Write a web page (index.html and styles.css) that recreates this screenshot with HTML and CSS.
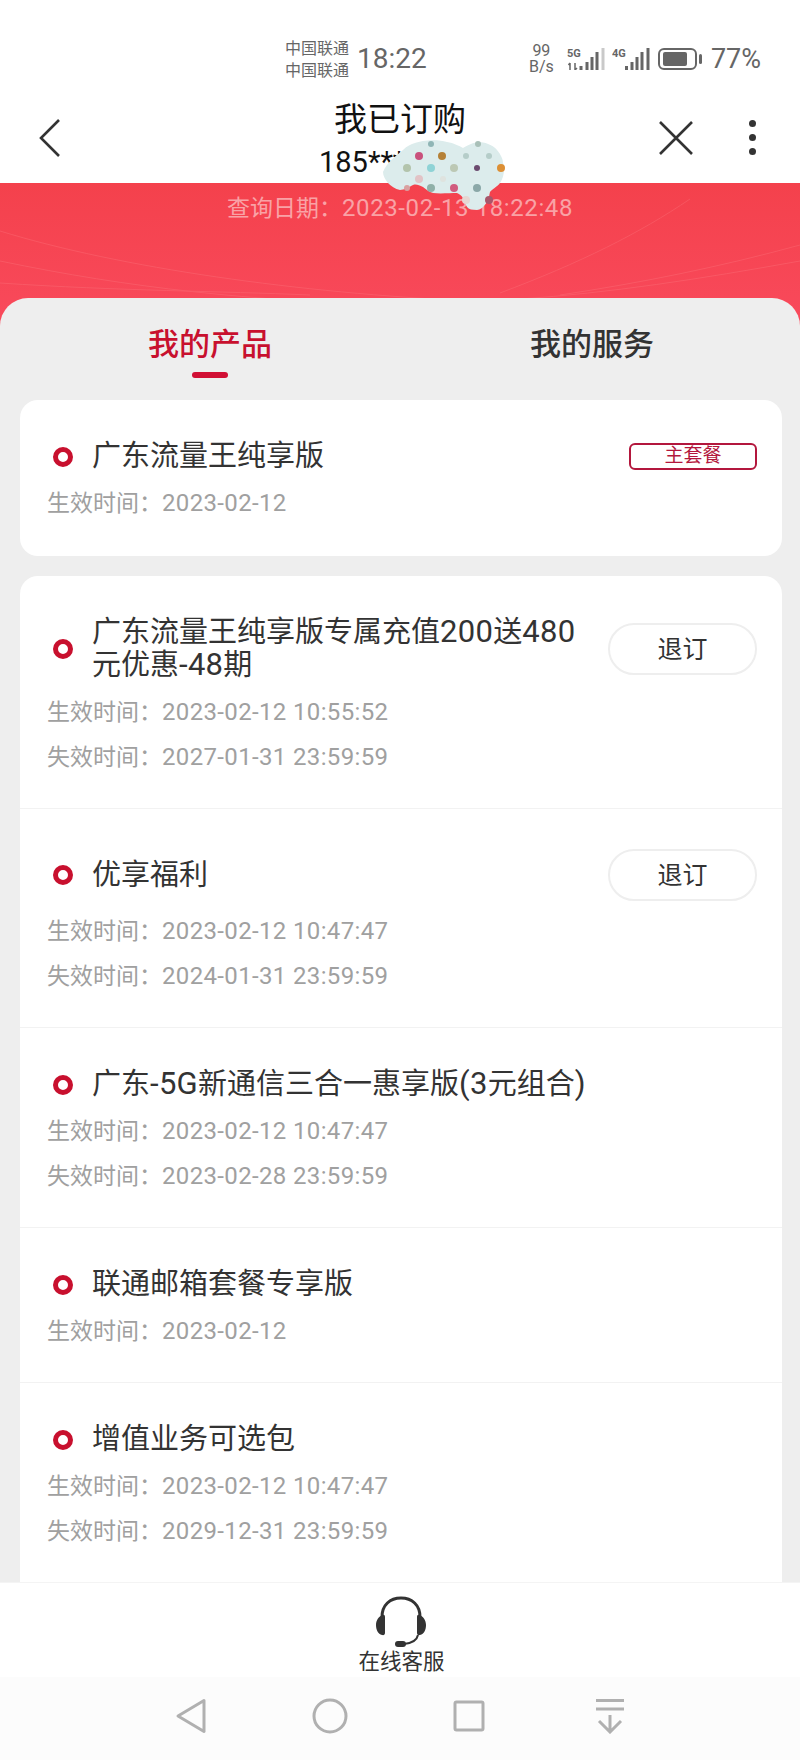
FILE: index.html
```html
<!DOCTYPE html>
<html lang="zh-CN">
<head>
    <meta charset="UTF-8">
    <meta name="viewport" content="width=device-width, initial-scale=1.0">
    <title>我已订购</title>
    <link rel="stylesheet" href="styles.css">
</head>
<body>
    <div class="page">
        <div class="status-bar">
            <div class="carrier"><span>中国联通</span><span>中国联通</span></div>
            <div class="clock">18:22</div>
            <div class="status-right">
                <div class="speed"><span>99</span><span>B/s</span></div>
                <svg class="signal" width="38" height="22" viewBox="0 0 38 22">
                    <text x="0" y="9" class="net-label">5G</text>
                    <path d="M3 15v7M1.500 17l1.500-2M8 15v7M8 22l2-2" stroke="#666" stroke-width="1.500" fill="none"/>
                    <rect x="12.500" y="18" width="3" height="4" fill="#666"/>
                    <rect x="18.500" y="14" width="3" height="8" fill="#666"/>
                    <rect x="23.500" y="9" width="3" height="13" fill="#666"/>
                    <rect x="28.500" y="4" width="3" height="18" fill="#666"/>
                    <rect x="34.500" y="0" width="3" height="22" fill="#c9c9c9"/>
                </svg>
                <svg class="signal" width="38" height="22" viewBox="0 0 38 22">
                    <text x="0" y="9" class="net-label">4G</text>
                    <rect x="13" y="18" width="3" height="4" fill="#666"/>
                    <rect x="18.500" y="14" width="3" height="8" fill="#666"/>
                    <rect x="23.500" y="9" width="3" height="13" fill="#666"/>
                    <rect x="28.500" y="4" width="3" height="18" fill="#666"/>
                    <rect x="34.500" y="0" width="3" height="22" fill="#666"/>
                </svg>
                <svg class="battery" width="44" height="22" viewBox="0 0 44 22">
                    <rect x="1" y="1" width="37" height="20" rx="5" fill="none" stroke="#666" stroke-width="2"/>
                    <rect x="5" y="4" width="24" height="14" rx="2" fill="#666"/>
                    <rect x="41" y="6" width="3" height="10" rx="1.500" fill="#666"/>
                </svg>
                <div class="percent">77%</div>
            </div>
        </div>

        <div class="nav-bar">
            <svg class="nav-back" width="24" height="40" viewBox="0 0 24 40">
                <path d="M21 2L3 20l18 18" fill="none" stroke="#333" stroke-width="2.600"/>
            </svg>
            <div class="nav-title">
                <div class="nav-name">我已订购</div>
                <div class="nav-phone">185****</div>
            </div>
            <svg class="nav-close" width="34" height="34" viewBox="0 0 34 34">
                <path d="M1 1l32 32M33 1L1 33" fill="none" stroke="#333" stroke-width="2.600"/>
            </svg>
            <div class="nav-more"><i></i><i></i><i></i></div>
        </div>

        <div class="hero">
            <svg class="hero-lines" width="800" height="150" viewBox="0 0 800 150">
                <g fill="none" stroke="#ff7f86" stroke-width="1" opacity="0.3">
                    <path d="M0 48C120 85 300 110 470 118"/>
                    <path d="M0 78C130 105 250 118 400 122"/>
                    <path d="M0 100C120 108 220 108 310 112"/>
                    <path d="M800 78C700 96 610 110 520 116"/>
                    <path d="M690 16C640 50 580 80 500 110"/>
                    <path d="M800 62C720 84 640 100 560 112"/>
                </g>
            </svg>
            <div class="query-date">查询日期：<span class="num">2023-02-13 18:22:48</span></div>
        </div>

        <!-- 打码的涂抹块 -->
        <svg class="smudge" width="124" height="72" viewBox="0 0 124 72">
            <path d="M1 32C5 22 14 16 21 10C25 6 29 4 33 3C40 0 56 -1 65 2C72 3 77 6 81 8C84 6 92 2 98 2C106 3 112 6 115 10C119 15 121 19 121 23C123 28 122 38 118 43C115 47 110 49 108 52C107 56 107 59 105 62C102 67 98 70 95 70C90 70 87 69 86 68C83 65 83 60 81 58C79 55 77 54 75 53C68 53 58 54 51 53C47 52 44 49 41 47C37 45 34 44 31 45C27 47 22 50 18 50C13 49 9 46 6 43C3 39 1 36 1 32Z" fill="#dcecec"/>
            <circle cx="49" cy="4" r="3" fill="#8fb5b5"/>
            <circle cx="96" cy="4" r="3" fill="#a9c0b8"/>
            <circle cx="37" cy="16" r="4" fill="#c9517c"/>
            <circle cx="60" cy="16" r="4" fill="#b58137"/>
            <circle cx="84" cy="16" r="3" fill="#b5cdc9"/>
            <circle cx="107" cy="16" r="3" fill="#b5cdc9"/>
            <circle cx="25" cy="28" r="4" fill="#b3c4ac"/>
            <circle cx="49" cy="28" r="4" fill="#8fd3d6"/>
            <circle cx="72" cy="28" r="4" fill="#bcc8b4"/>
            <circle cx="95" cy="28" r="3" fill="#6b4a6e"/>
            <circle cx="119" cy="28" r="4" fill="#dc8f35"/>
            <circle cx="37" cy="39" r="4" fill="#e2c3c6"/>
            <circle cx="61" cy="39" r="3" fill="#dfe3df"/>
            <circle cx="25" cy="48" r="3" fill="#d9a0a0"/>
            <circle cx="49" cy="48" r="4" fill="#8fb0a8"/>
            <circle cx="72" cy="48" r="4" fill="#d15b7e"/>
            <circle cx="95" cy="48" r="4" fill="#8ba8a8"/>
            <circle cx="84" cy="60" r="4" fill="#e6d6d2"/>
            <circle cx="107" cy="60" r="4" fill="#a8566a"/>
        </svg>

        <div class="sheet">
            <div class="tabs">
                <div class="tab tab-active">我的产品</div>
                <div class="tab">我的服务</div>
            </div>

            <div class="card">
                <div class="row row-main">
                    <div class="row-head">
                        <span class="dot"></span>
                        <div class="row-title">广东流量王纯享版</div>
                        <span class="badge">主套餐</span>
                    </div>
                    <div class="meta">生效时间：<span class="num">2023-02-12</span></div>
                </div>
            </div>

            <div class="card">
                <div class="row">
                    <div class="row-head">
                        <span class="dot"></span>
                        <div class="row-title">广东流量王纯享版专属充值<span class="title-num">200</span>送<span class="title-num">480</span>元优惠<span class="title-num">-48</span>期</div>
                        <button class="btn">退订</button>
                    </div>
                    <div class="meta">生效时间：<span class="num">2023-02-12 10:55:52</span></div>
                    <div class="meta">失效时间：<span class="num">2027-01-31 23:59:59</span></div>
                </div>
                <div class="row">
                    <div class="row-head">
                        <span class="dot"></span>
                        <div class="row-title">优享福利</div>
                        <button class="btn">退订</button>
                    </div>
                    <div class="meta">生效时间：<span class="num">2023-02-12 10:47:47</span></div>
                    <div class="meta">失效时间：<span class="num">2024-01-31 23:59:59</span></div>
                </div>
                <div class="row">
                    <div class="row-head">
                        <span class="dot"></span>
                        <div class="row-title">广东<span class="title-num">-5G</span>新通信三合一惠享版<span class="title-num">(3</span>元组合<span class="title-num">)</span></div>
                    </div>
                    <div class="meta">生效时间：<span class="num">2023-02-12 10:47:47</span></div>
                    <div class="meta">失效时间：<span class="num">2023-02-28 23:59:59</span></div>
                </div>
                <div class="row">
                    <div class="row-head">
                        <span class="dot"></span>
                        <div class="row-title">联通邮箱套餐专享版</div>
                    </div>
                    <div class="meta">生效时间：<span class="num">2023-02-12</span></div>
                </div>
                <div class="row">
                    <div class="row-head">
                        <span class="dot"></span>
                        <div class="row-title">增值业务可选包</div>
                    </div>
                    <div class="meta">生效时间：<span class="num">2023-02-12 10:47:47</span></div>
                    <div class="meta">失效时间：<span class="num">2029-12-31 23:59:59</span></div>
                </div>
            </div>
        </div>

        <div class="service">
            <svg class="service-icon" width="52" height="52" viewBox="0 0 52 52">
                <path d="M7 21C7 9 15 2 26 2s19 7 19 19" fill="none" stroke="#333" stroke-width="3"/>
                <path d="M8 19c-4 1-7 5-7 10s2 9 6 10c2 .5 3-.5 3-2V21c0-1.500-1-2.500-2-2z" fill="#333"/>
                <path d="M44 19c4 1 7 5 7 10s-2 9-6 10c-2 .5-3-.5-3-2V21c0-1.500 1-2.500 2-2z" fill="#333"/>
                <path d="M43 39c-1 5-5 8-14 9" fill="none" stroke="#333" stroke-width="2"/>
                <rect x="20" y="45" width="11" height="6" rx="3" fill="#333"/>
            </svg>
            <div class="service-label">在线客服</div>
        </div>

        <div class="system-nav">
            <svg width="32" height="36" viewBox="0 0 32 36">
                <path d="M29 2.500L3 18l26 15.500z" fill="none" stroke="#b0b0b0" stroke-width="3" stroke-linejoin="round"/>
            </svg>
            <svg width="36" height="36" viewBox="0 0 36 36">
                <circle cx="18" cy="18" r="16" fill="none" stroke="#b0b0b0" stroke-width="3"/>
            </svg>
            <svg width="32" height="32" viewBox="0 0 32 32">
                <rect x="2" y="2" width="28" height="28" rx="1.500" fill="none" stroke="#b0b0b0" stroke-width="3"/>
            </svg>
            <svg class="nav-last" width="32" height="36" viewBox="0 0 32 36">
                <path d="M2 2.500h28M2 11h28M16 17v17M5 23l11 11 11-11" fill="none" stroke="#b0b0b0" stroke-width="3"/>
            </svg>
        </div>
    </div>
</body>
</html>
```

FILE: styles.css
```css
* {
    margin: 0;
    padding: 0;
    box-sizing: border-box;
}

body {
    background: #fff;
    font-family: Roboto, "Noto Sans CJK SC", sans-serif;
    color: #333;
}

.page {
    position: relative;
    width: 800px;
    height: 1760px;
    display: flex;
    flex-direction: column;
    overflow: hidden;
}

.num {
    font-size: 24px;
    letter-spacing: 0.35px;
}

/* 状态栏 */
.status-bar {
    height: 88px;
    padding: 38px 39px 0 285px;
    display: flex;
    align-items: flex-start;
    color: #666;
}

.carrier {
    width: 72px;
    display: flex;
    flex-direction: column;
    font-size: 16px;
    line-height: 22px;
}

.clock {
    font-size: 28px;
    line-height: 42px;
}

.status-right {
    margin-left: auto;
    display: flex;
    align-items: center;
    height: 42px;
}

.speed {
    display: flex;
    flex-direction: column;
    align-items: center;
    width: 27px;
    font-size: 16px;
    line-height: 16px;
    margin-right: 12px;
}

.signal {
    margin-right: 7px;
}

.net-label {
    font-size: 11px;
    font-weight: 700;
    fill: #666;
}

.battery {
    margin: 0 9px 0 1px;
}

.percent {
    font-size: 27px;
}

/* 标题栏 */
.nav-bar {
    height: 95px;
    padding: 4px 44px 0 38px;
    display: flex;
    align-items: center;
    position: relative;
}

.nav-title {
    position: absolute;
    left: 0;
    right: 0;
    top: 11px;
    text-align: center;
    color: #111;
}

.nav-name {
    font-size: 33px;
    line-height: 42px;
}

.nav-phone {
    font-size: 29px;
    line-height: 36px;
    width: 162px;
    margin: 3px 0 0 319px;
    text-align: left;
}

.nav-close {
    margin-left: auto;
    margin-right: 56px;
}

.nav-more {
    display: flex;
    flex-direction: column;
    gap: 7px;
}

.nav-more i {
    display: block;
    width: 7px;
    height: 7px;
    border-radius: 50%;
    background: #333;
}

/* 红色背景 */
.hero {
    position: relative;
    height: 145px;
    margin-bottom: -30px;
    padding-top: 10px;
    background: linear-gradient(#f4414c, #f94a5c);
    text-align: center;
    flex-shrink: 0;
}

.hero-lines {
    position: absolute;
    left: 0;
    top: 0;
}

.query-date {
    position: relative;
    font-size: 23px;
    line-height: 30px;
    color: #f9a2a6;
}

.query-date .num {
    letter-spacing: 0.6px;
}

.smudge {
    position: absolute;
    left: 382px;
    top: 140px;
    z-index: 5;
}

/* 内容区 */
.sheet {
    position: relative;
    flex: 1;
    min-height: 0;
    padding: 0 18px 0 20px;
    background: #eee;
    border-radius: 28px 28px 0 0;
    overflow: hidden;
}

.tabs {
    height: 102px;
    margin: 0 -18px 0 -20px;
    display: flex;
}

.tab {
    flex: 1;
    padding-top: 25px;
    text-align: center;
    font-size: 31px;
    line-height: 44px;
    font-weight: 500;
}

.tab-active {
    color: #c8102e;
    position: relative;
    flex: 0 0 420px;
}

.tab-active::after {
    content: "";
    position: absolute;
    left: 192px;
    top: 74px;
    width: 36px;
    height: 6px;
    border-radius: 3px;
    background: #d10f34;
}

.tabs .tab:last-child {
    flex: 0 0 342px;
    padding-left: 2px;
}

.card {
    background: #fff;
    border-radius: 18px;
    margin-bottom: 20px;
}

.row {
    padding: 40px 25px 28px 27px;
    border-bottom: 1px solid #f2f2f2;
}

.row-main {
    padding-bottom: 30px;
}

.row:last-child {
    border-bottom: none;
}

.row-head {
    display: flex;
    align-items: center;
}

.dot {
    width: 20px;
    height: 20px;
    margin: 0 19px 0 6px;
    border: 5px solid #c8102e;
    border-radius: 50%;
    flex-shrink: 0;
}

.row-title {
    flex: 1;
    font-size: 29px;
    line-height: 33px;
}

.title-num {
    font-size: 31px;
    line-height: 1;
    letter-spacing: 0.3px;
}

.badge {
    width: 128px;
    height: 27px;
    border: 2px solid #b3173d;
    border-radius: 6px;
    color: #b3173d;
    font-size: 19px;
    line-height: 22px;
    text-align: center;
}

.btn {
    width: 149px;
    height: 52px;
    margin-left: 28px;
    padding-bottom: 5px;
    background: #fff;
    border: 2px solid #eee;
    border-radius: 26px;
    font-family: inherit;
    font-size: 25px;
    color: #333;
    flex-shrink: 0;
}

.meta {
    font-size: 23px;
    line-height: 45px;
    color: #a0a0a0;
}

.row-head + .meta {
    margin-top: 8px;
}

.card:last-child .row:last-child {
    padding-bottom: 70px;
}

/* 底部 */
.service {
    height: 95px;
    padding-top: 13px;
    background: #fff;
    border-top: 1px solid #f4f4f4;
    display: flex;
    flex-direction: column;
    align-items: center;
    flex-shrink: 0;
}

.service-icon {
    display: block;
    margin-left: 2px;
}

.service-label {
    padding-left: 3px;
    font-size: 21.5px;
    line-height: 28px;
}

.system-nav {
    height: 83px;
    padding: 0 0 5px 175px;
    background: #fcfcfc;
    display: flex;
    align-items: center;
    gap: 105px;
    flex-shrink: 0;
}

.nav-last {
    margin-left: 4px;
}
```
